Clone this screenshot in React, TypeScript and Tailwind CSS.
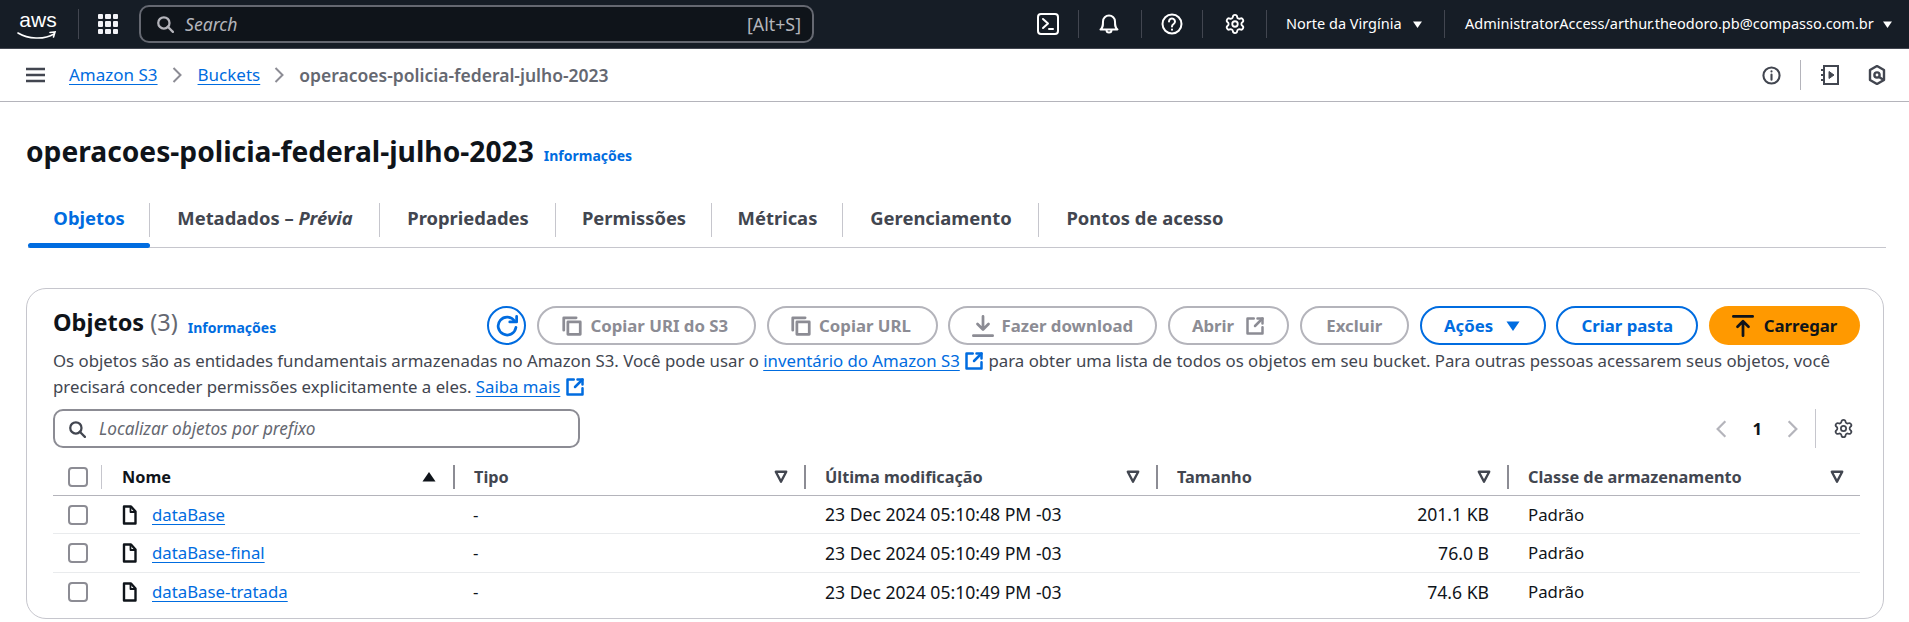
import type { ReactNode } from "react";
import { Settings } from "lucide-react";

type IconProps = { className?: string; children: ReactNode };

function Icon({ className, children }: IconProps) {
  return (
    <svg
      viewBox="0 0 16 16"
      fill="none"
      stroke="currentColor"
      strokeWidth="2"
      strokeLinecap="round"
      strokeLinejoin="round"
      className={className}
    >
      {children}
    </svg>
  );
}

const SearchIcon = ({ className }: { className?: string }) => (
  <Icon className={className}>
    <circle cx="7" cy="7" r="5" />
    <path d="M15 15l-4.5-4.5" />
  </Icon>
);

const CopyIcon = () => (
  <Icon className="-ml-[3px] h-[22px] w-[22px]">
    <path d="M2 11V2h9" />
    <path d="M5 5h9v9H5z" />
  </Icon>
);

const ExternalIcon = ({ className }: { className?: string }) => (
  <Icon className={className}>
    <path d="M14 9v5H2V2h5" />
    <path d="M10 2h4v4" />
    <path d="M14 2L8 8" />
  </Icon>
);

const FileIcon = () => (
  <svg viewBox="0 0 16 20" className="h-5 w-4 text-[#0f141a]" fill="none" stroke="currentColor" strokeWidth="2.4" strokeLinejoin="round">
    <path d="M2 1.5h7l4.5 5v12H2z" />
    <path d="M8.5 2v5h5" strokeWidth="1.8" />
  </svg>
);

const Caret = ({ className }: { className?: string }) => (
  <svg viewBox="0 0 16 16" className={className} fill="currentColor">
    <path d="M1.5 3.5h13L8 13z" />
  </svg>
);

const Checkbox = () => <div className="h-5 w-5 rounded-[4px] border-2 border-[#8c8c94] bg-white" />;

const NavSep = () => <div className="h-7 w-px bg-[#424650]" />;

type ActionProps = { width: string; children: ReactNode };

function DisabledButton({ width, children }: ActionProps) {
  return (
    <button className={`flex h-[39px] items-center justify-center gap-[7px] rounded-[20px] border-2 border-[#b4b4bb] bg-white text-[16.8px] font-bold text-[#8c8c94] ${width}`}>
      {children}
    </button>
  );
}

function PrimaryOutline({ width, children }: ActionProps) {
  return (
    <button className={`flex h-[39px] items-center justify-center gap-3 rounded-[20px] border-2 border-[#006ce0] bg-white text-[16.8px] font-bold text-[#006ce0] ${width}`}>
      {children}
    </button>
  );
}

const tabs = [
  { label: "Objetos", width: "w-[122px]", active: true },
  { label: "Metadados – ", italic: "Prévia", width: "w-[230px]" },
  { label: "Propriedades", width: "w-[176px]" },
  { label: "Permissões", width: "w-[156px]" },
  { label: "Métricas", width: "w-[131px]" },
  { label: "Gerenciamento", width: "w-[196px]" },
  { label: "Pontos de acesso", width: "w-[212px]" },
];

const columns = [
  { label: "Nome", active: true },
  { label: "Tipo" },
  { label: "Última modificação" },
  { label: "Tamanho" },
  { label: "Classe de armazenamento" },
];

const rows = [
  { name: "dataBase", date: "23 Dec 2024 05:10:48 PM -03", size: "201.1 KB" },
  { name: "dataBase-final", date: "23 Dec 2024 05:10:49 PM -03", size: "76.0 B" },
  { name: "dataBase-tratada", date: "23 Dec 2024 05:10:49 PM -03", size: "74.6 KB" },
];

const gridCols = "grid grid-cols-[48px_352px_351px_352px_351px_353px]";

export default function App() {
  return (
    <div className="h-[622px] overflow-hidden bg-white font-['Noto_Sans',sans-serif] text-[16.8px] text-[#0f141a]">
      <header className="flex h-[49px] items-center border-b border-[#424650] bg-[#161d26] text-[14.5px] text-white">
        <div className="relative ml-[17px] h-[34px] w-[42px]">
          <span className="block text-center font-['Liberation_Sans',sans-serif] text-[21px] leading-[26px]">aws</span>
          <svg viewBox="0 0 40 10" className="absolute bottom-0 left-0 h-[10px] w-10" fill="none" stroke="currentColor" strokeWidth="1.6" strokeLinecap="round">
            <path d="M1 2c10 6 26 7 36 1" />
            <path d="M33 1.5l5-.5-1.5 5" />
          </svg>
        </div>
        <div className="ml-[19px] h-[30px] w-px bg-[#424650]" />
        <div className="ml-[19px] grid h-5 w-5 grid-cols-3 gap-[2px]">
          {Array.from({ length: 9 }).map((_, i) => (
            <span key={i} className="rounded-[1px] bg-[#f3f3f7]" />
          ))}
        </div>
        <div className="ml-[21px] flex h-[38px] w-[675px] items-center rounded-[10px] border-2 border-[#656871] bg-[#0f141a] pl-[15px] pr-[11px]">
          <SearchIcon className="h-[18px] w-[18px] text-[#b4b4bb]" />
          <span className="ml-[11px] text-[17.6px] italic text-[#b4b4bb]">Search</span>
          <span className="ml-auto text-[17.8px] text-[#b4b4bb]">[Alt+S]</span>
        </div>
        <div className="ml-[223px] flex w-[22px] justify-center">
          <svg viewBox="0 0 22 22" className="h-[22px] w-[22px]" fill="none" stroke="currentColor" strokeWidth="2" strokeLinecap="round" strokeLinejoin="round">
            <rect x="1" y="1" width="20" height="20" rx="3" />
            <path d="M6 6l5 4.5L6 15" />
            <path d="M12 16h4" />
          </svg>
        </div>
        <div className="ml-[19px]"><NavSep /></div>
        <svg viewBox="0 0 20 22" className="ml-[20px] h-[22px] w-5" fill="none" stroke="currentColor" strokeWidth="2" strokeLinejoin="round">
          <path d="M1.5 16.5c2.5-2 2.5-4 2.5-8a6 6 0 0 1 12 0c0 4 0 6 2.5 8z" />
          <path d="M7.5 17a2.5 2.5 0 0 0 5 0" />
        </svg>
        <div className="ml-[22px]"><NavSep /></div>
        <svg viewBox="0 0 22 22" className="ml-[19px] h-[22px] w-[22px]" fill="none" stroke="currentColor" strokeWidth="2" strokeLinecap="round">
          <circle cx="11" cy="11" r="9.5" />
          <path d="M8 8.5a3 3 0 1 1 4.6 2.5c-1 .7-1.6 1.2-1.6 2.5" />
          <path d="M11 16.5v.2" />
        </svg>
        <div className="ml-[19px]"><NavSep /></div>
        <Settings className="ml-[21px] h-[22px] w-[22px]" strokeWidth={2} />
        <div className="ml-[20px]"><NavSep /></div>
        <span className="ml-[19px] w-[119px] whitespace-nowrap">Norte da Virgínia</span>
        <Caret className="ml-[7px] h-[11px] w-[11px]" />
        <div className="ml-[21px]"><NavSep /></div>
        <span className="ml-[20px] w-[411px] whitespace-nowrap">AdministratorAccess/arthur.theodoro.pb@compasso.com.br</span>
        <Caret className="ml-[6px] h-[11px] w-[11px]" />
      </header>

      <nav className="flex h-[53px] items-center border-b border-[#b4b4bb] pl-[26px] text-[17px]">
        <svg viewBox="0 0 19 16" className="h-4 w-[19px] text-[#424650]" fill="none" stroke="currentColor" strokeWidth="2.6">
          <path d="M0 2h19M0 8h19M0 14h19" />
        </svg>
        <a className="ml-[24px] text-[#006ce0] underline underline-offset-[3px]">Amazon S3</a>
        <svg viewBox="0 0 10 16" className="ml-[14px] h-4 w-[10px] text-[#8c8c94]" fill="none" stroke="currentColor" strokeWidth="2"><path d="M1.5 1l7 7-7 7" /></svg>
        <a className="ml-[16px] text-[#006ce0] underline underline-offset-[3px]">Buckets</a>
        <svg viewBox="0 0 10 16" className="ml-[14px] h-4 w-[10px] text-[#8c8c94]" fill="none" stroke="currentColor" strokeWidth="2"><path d="M1.5 1l7 7-7 7" /></svg>
        <span className="ml-[15px] text-[17.5px] font-semibold text-[#656871]">operacoes-policia-federal-julho-2023</span>
        <div className="ml-auto flex items-center text-[#424650]">
          <svg viewBox="0 0 20 20" className="h-[19px] w-[19px]" fill="none" stroke="currentColor" strokeWidth="2.2" strokeLinecap="round">
            <circle cx="10" cy="10" r="8.5" />
            <path d="M10 9v5.5M10 5.5v.2" />
          </svg>
          <div className="ml-[19px] h-[30px] w-px bg-[#b4b4bb]" />
          <svg viewBox="0 0 20 20" className="ml-[19px] h-5 w-5" fill="none" stroke="currentColor" strokeWidth="2">
            <path d="M4 1h14v18H4z" />
            <path d="M1 5h4M1 10h4M1 15h4" />
            <path d="M9 6.5l5 3.5-5 3.5z" fill="currentColor" strokeWidth="1" />
          </svg>
          <svg viewBox="0 0 18 20" className="ml-[28px] mr-[23px] h-5 w-[18px]" fill="none" stroke="currentColor" strokeWidth="2.4" strokeLinejoin="round">
            <path d="M9 1l7 4v10l-7 4-7-4V5z" />
            <circle cx="9" cy="10" r="2.6" />
            <path d="M11 12l4 2.5" />
          </svg>
        </div>
      </nav>

      <main className="pl-[26px] pr-[25px]">
        <div className="flex h-[94px] items-center pt-[5px]">
          <h1 className="text-[28.2px] font-bold leading-none">operacoes-policia-federal-julho-2023</h1>
          <a className="ml-[10px] mt-[8px] text-[14px] font-bold text-[#006ce0]">Informações</a>
        </div>

        <div className="ml-[2px] mr-[-2px] flex h-[52px] border-b border-[#c6c6cd]">
          {tabs.map((tab, index) => (
            <div key={tab.label} className={`relative flex h-full items-center justify-center pb-[7px] text-[18.4px] font-bold ${tab.width} ${tab.active ? "text-[#006ce0]" : "text-[#424650]"}`}>
              {index < tabs.length - 1 && <span className="absolute right-0 top-[7px] h-[34px] w-px bg-[#c6c6cd]" />}
              {tab.active && <span className="absolute bottom-[-1px] left-0 right-0 h-[5px] rounded-full bg-[#006ce0]" />}
              <span>
                {tab.label}
                {tab.italic && <i>{tab.italic}</i>}
              </span>
            </div>
          ))}
        </div>

        <section className="mt-[40px] h-[331px] rounded-[20px] border border-[#c6c6cd] pl-[26px] pr-[23px] pt-[17px]">
          <div className="flex h-[39px] items-center">
            <h2 className="mb-[6px] text-[23.5px] font-bold leading-none">
              Objetos <span className="font-normal text-[#656871]">(3)</span>
            </h2>
            <a className="ml-[10px] mt-[4px] text-[14px] font-bold text-[#006ce0]">Informações</a>
            <div className="ml-auto flex items-center gap-[10.75px]">
              <button className="flex h-[39px] w-[39px] items-center justify-center rounded-full border-2 border-[#006ce0] text-[#006ce0]">
                <Icon className="h-[22px] w-[22px]">
                  <path d="M10 5h5V1" />
                  <path d="M14.5 9A6.5 6.5 0 1 1 13.6 4.6" />
                </Icon>
              </button>
              <DisabledButton width="w-[219px]"><CopyIcon />Copiar URI do S3</DisabledButton>
              <DisabledButton width="w-[171px]"><CopyIcon />Copiar URL</DisabledButton>
              <DisabledButton width="w-[209px]">
                <Icon className="h-[22px] w-[22px]">
                  <path d="M8 1v9M4 6.5l4 4 4-4M1 15h14" />
                </Icon>
                Fazer download
              </DisabledButton>
              <DisabledButton width="w-[121px]">Abrir<ExternalIcon className="ml-1 h-5 w-5" /></DisabledButton>
              <DisabledButton width="w-[109px]">Excluir</DisabledButton>
              <PrimaryOutline width="w-[126px]">Ações<Caret className="h-[16px] w-[16px]" /></PrimaryOutline>
              <PrimaryOutline width="w-[142px]">Criar pasta</PrimaryOutline>
              <button className="flex h-[39px] w-[151px] items-center justify-center gap-[10px] rounded-[20px] bg-[#ff9900] text-[16.8px] font-bold text-[#0f141a]">
                <Icon className="h-[22px] w-[22px]">
                  <path d="M1 1h14M8 15V5M4 8.5L8 4.5l4 4" />
                </Icon>
                Carregar
              </button>
            </div>
          </div>

          <p className="mt-[3px] w-[1800px] text-[16.8px] leading-[26px] text-[#424650]">
            Os objetos são as entidades fundamentais armazenadas no Amazon S3. Você pode usar o{" "}
            <a className="text-[#006ce0] underline underline-offset-[3px]">inventário do Amazon S3</a>{" "}
            <ExternalIcon className="inline h-5 w-5 align-[-4px] text-[#006ce0]" /> para obter uma lista de todos os objetos em seu bucket. Para outras pessoas acessarem seus objetos, você precisará conceder permissões explicitamente a eles.{" "}
            <a className="text-[#006ce0] underline underline-offset-[3px]">Saiba mais</a>{" "}
            <ExternalIcon className="inline h-5 w-5 align-[-4px] text-[#006ce0]" />
          </p>

          <div className="mt-[9px] flex items-center justify-between">
            <div className="flex h-[39px] w-[527px] items-center rounded-[10px] border-2 border-[#8c8c94] pl-[13px]">
              <SearchIcon className="h-[18px] w-[18px] text-[#424650]" />
              <span className="ml-[13px] text-[17.2px] italic text-[#656871]">Localizar objetos por prefixo</span>
            </div>
            <div className="flex items-center">
              <svg viewBox="0 0 10 16" className="h-[18px] w-[11px] text-[#b4b4bb]" fill="none" stroke="currentColor" strokeWidth="2"><path d="M8.5 1l-7 7 7 7" /></svg>
              <span className="mx-[25px] text-[16.8px] font-bold">1</span>
              <svg viewBox="0 0 10 16" className="h-[18px] w-[11px] text-[#b4b4bb]" fill="none" stroke="currentColor" strokeWidth="2"><path d="M1.5 1l7 7-7 7" /></svg>
              <div className="ml-[17px] h-[39px] w-px bg-[#c6c6cd]" />
              <Settings className="ml-[17px] mr-[6px] h-[21px] w-[21px] text-[#424650]" strokeWidth={2} />
            </div>
          </div>

          <div className={`${gridCols} mt-[10px] h-[38px] border-b border-[#b4b4bb] pb-[7px] pt-[7px] text-[16.3px] text-[#424650]`}>
            <div className="flex items-center pl-[15px]">
              <Checkbox />
            </div>
            {columns.map((col, index) => (
              <div
                key={col.label}
                className={`flex items-center justify-between pr-[16px] font-bold ${index === 0 ? "border-l border-[#c6c6cd] pl-[20px] text-[#0f141a]" : "border-l-2 border-[#8c8c94] pl-[19px]"}`}
              >
                <span>{col.label}</span>
                {col.active ? (
                  <Caret className="h-[16px] w-[16px] rotate-180 text-[#0f141a]" />
                ) : (
                  <svg viewBox="0 0 12 12" className="h-[14px] w-[14px]" fill="none" stroke="currentColor" strokeWidth="2" strokeLinejoin="round">
                    <path d="M1.5 1.5h9L6 10z" />
                  </svg>
                )}
              </div>
            ))}
          </div>

          {rows.map((row, index) => (
            <div key={row.name} className={`${gridCols} h-[38.3px] items-center ${index < rows.length - 1 ? "border-b border-[#e9ebed]" : ""}`}>
              <div className="pl-[15px]">
                <Checkbox />
              </div>
              <div className="flex items-center gap-[14px] pl-[21px]">
                <FileIcon />
                <a className="text-[#006ce0] underline underline-offset-[3px]">{row.name}</a>
              </div>
              <div className="pl-[20px]">-</div>
              <div className="pl-[21px] text-[17.6px]">{row.date}</div>
              <div className="pr-[18px] text-right text-[17.6px]">{row.size}</div>
              <div className="pl-[21px]">Padrão</div>
            </div>
          ))}
        </section>
      </main>
    </div>
  );
}
